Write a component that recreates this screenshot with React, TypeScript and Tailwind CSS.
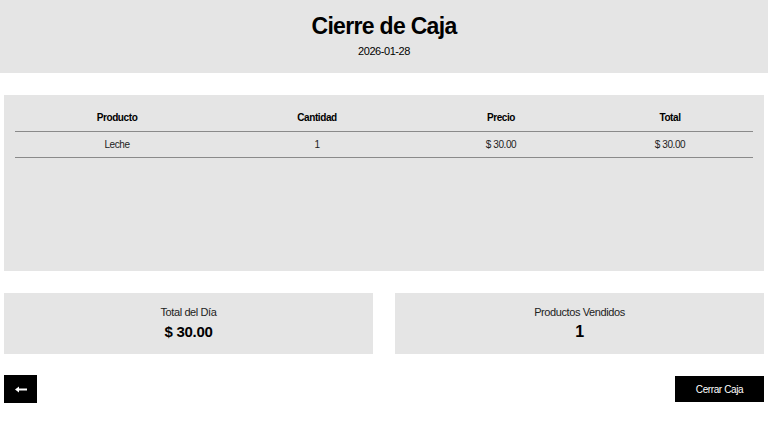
import React from "react";

const ROWS = [{ producto: "Leche", cantidad: 1, precio: 30, total: 30 }];

export default function App() {
  const totalDia = ROWS.reduce((s, r) => s + r.total, 0);
  const vendidos = ROWS.reduce((s, r) => s + r.cantidad, 0);

  return (
    <div className="min-h-screen bg-white text-black tracking-[-0.025em] font-['Liberation_Sans',Arial,sans-serif]">
      {/* Header */}
      <header className="h-[73px] bg-[#e5e5e5] flex flex-col items-center pt-[11px]">
        <h1 className="text-[23px] font-bold leading-[30px] tracking-[-0.03em]">Cierre de Caja</h1>
        <p className="text-[11px] leading-[13px] mt-[4px] tracking-[-0.04em]">2026-01-28</p>
      </header>

      {/* Tabla */}
      <section className="mx-[4px] mt-[22px] h-[176px] bg-[#e5e5e5] px-[11px] pt-[10px]">
        <table className="w-full border-collapse text-[10px] table-fixed">
          <colgroup>
            <col className="w-[204px]" />
            <col className="w-[196px]" />
            <col className="w-[172px]" />
            <col />
          </colgroup>
          <thead>
            <tr className="border-b border-[#8a8a8a] h-[26px]">
              <th className="font-bold text-center">Producto</th>
              <th className="font-bold text-center">Cantidad</th>
              <th className="font-bold text-center">Precio</th>
              <th className="font-bold text-center">Total</th>
            </tr>
          </thead>
          <tbody>
            {ROWS.map((r) => (
              <tr key={r.producto} className="border-b border-[#8a8a8a] h-[26px] text-[#222]">
                <td className="text-center">{r.producto}</td>
                <td className="text-center">{r.cantidad}</td>
                <td className="text-center">$ {r.precio.toFixed(2)}</td>
                <td className="text-center">$ {r.total.toFixed(2)}</td>
              </tr>
            ))}
          </tbody>
        </table>
      </section>

      {/* Resumen */}
      <section className="mx-[4px] mt-[22px] grid grid-cols-2 gap-[22px]">
        <div className="h-[61px] bg-[#e5e5e5] flex flex-col items-center pt-[12px]">
          <span className="text-[11px] leading-[14px] text-[#222]">Total del Día</span>
          <span className="text-[15px] font-bold leading-[20px] mt-[3px] tracking-[-0.02em]">$ {totalDia.toFixed(2)}</span>
        </div>
        <div className="h-[61px] bg-[#e5e5e5] flex flex-col items-center pt-[12px]">
          <span className="text-[11px] leading-[14px] text-[#222]">Productos Vendidos</span>
          <span className="text-[16px] font-bold leading-[20px] mt-[3px]">{vendidos}</span>
        </div>
      </section>

      {/* Acciones */}
      <footer className="mx-[4px] mt-[21px] flex items-start justify-between">
        <button className="w-[33px] h-[28px] bg-black flex items-center justify-center">
          <svg width="12" height="7" viewBox="0 0 12 7" fill="white">
            <path d="M0 3.5 L4 0.5 L4 2.5 L12 2.5 L12 4.5 L4 4.5 L4 6.5 Z" />
          </svg>
        </button>
        <button className="w-[89px] h-[26px] mt-[1px] bg-black text-white text-[10px]">
          Cerrar Caja
        </button>
      </footer>
    </div>
  );
}
